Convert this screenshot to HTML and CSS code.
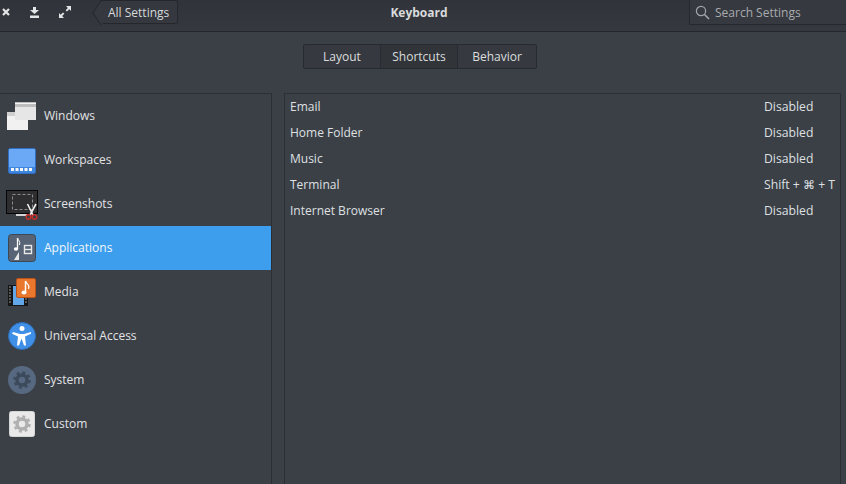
FILE: index.html
```html
<!DOCTYPE html>
<html lang="en">
<head>
    <meta charset="UTF-8">
    <title>Keyboard</title>
    <link rel="stylesheet" href="styles.css">
</head>
<body>
    <header class="titlebar">
        <div class="window-controls">
            <svg class="control close" width="10" height="10" viewBox="0 0 10 10"><path d="M2 2l6 6M8 2l-6 6" stroke="#e4e5e6" stroke-width="2.2" fill="none"/></svg>
            <svg class="control save" width="12" height="12" viewBox="0 0 12 12"><path d="M4 1h3v3h3L5.500 8 1 4h3zM1 9.500h9V12H1z" fill="#e4e5e6"/></svg>
            <svg class="control maximize" width="14" height="14" viewBox="0 0 14 14"><path d="M8 1h5v5l-1.700-1.700-2.300 2.300-1.400-1.400 2.300-2.200zM1 13V8l1.700 1.700 2.300-2.300 1.400 1.400-2.300 2.200L6 13z" fill="#e4e5e6"/></svg>
        </div>
        <button class="back-button"><span class="back-label">All Settings</span></button>
        <div class="title">Keyboard</div>
        <div class="search">
            <svg width="15" height="15" viewBox="0 0 15 15"><circle cx="6" cy="6" r="4.600" stroke="#a3a5a8" stroke-width="1.200" fill="none"/><path d="M9.500 9.500l4.500 4.500" stroke="#a3a5a8" stroke-width="1.600"/></svg>
            <span>Search Settings</span>
        </div>
    </header>

    <div class="tabs-row">
        <div class="tabs">
            <div class="tab tab-layout">Layout</div>
            <div class="tab tab-shortcuts active">Shortcuts</div>
            <div class="tab tab-behavior">Behavior</div>
        </div>
    </div>

    <main class="content">
        <nav class="sidebar">
            <div class="item">
                <svg viewBox="0 0 44 44"><rect x="7" y="18" width="21" height="18" fill="#f1f1f1"/><rect x="7" y="18" width="8" height="4" fill="#cfcfcf"/><rect x="15" y="8" width="21" height="18" fill="#e6e6e6"/><rect x="15" y="8" width="21" height="5" fill="#bdbdbd"/><rect x="15" y="9" width="21" height="1" fill="#f4f4f4"/></svg>
                <span>Windows</span>
            </div>
            <div class="item">
                <svg viewBox="0 0 44 44"><rect x="8.500" y="10.500" width="27" height="25" rx="2" fill="#3f86df" stroke="#2e6fc4"/><rect x="9" y="11" width="26" height="18" fill="#6ba8f5"/><path d="M11 30h3v3h-3zM15.500 30h3v3h-3zM20 30h3v3h-3zM24.500 30h3v3h-3zM29 30h3v3h-3z" fill="#f4f7fb"/></svg>
                <span>Workspaces</span>
            </div>
            <div class="item">
                <svg viewBox="0 0 44 44"><rect x="6.500" y="8.500" width="31" height="23" fill="#2e2e30" stroke="#050505"/><rect x="12.500" y="12.500" width="20" height="15" fill="none" stroke="#8c8c8c" stroke-dasharray="3 2"/><path d="M16 32h11v2H16z" fill="#d4d4d4"/><path d="M27.500 22l5.500 11M36 22l-6 11" stroke="#f0f0f0" stroke-width="1.600"/><circle cx="28.500" cy="35" r="2.300" fill="none" stroke="#c4312b" stroke-width="1.500"/><circle cx="34.500" cy="35" r="2.300" fill="none" stroke="#c4312b" stroke-width="1.500"/></svg>
                <span>Screenshots</span>
            </div>
            <div class="item selected">
                <svg viewBox="0 0 44 44"><rect x="8.500" y="8.500" width="27" height="27" rx="3" fill="#586475" stroke="#3e4650"/><path d="M17.500 12v11" stroke="#fff" stroke-width="1.300"/><path d="M17.500 12c1 3 3 3 2 7" fill="none" stroke="#fff"/><ellipse cx="16" cy="23" rx="2.200" ry="1.700" fill="#fff"/><path d="M19 26v8h-5z" fill="#e8e8e8"/><rect x="24.500" y="19.500" width="7" height="8" fill="none" stroke="#e8e8e8" stroke-width="1.400"/><path d="M24.500 23.500h7" stroke="#e8e8e8" stroke-width="1.400"/></svg>
                <span>Applications</span>
            </div>
            <div class="item">
                <svg viewBox="0 0 44 44"><rect x="8" y="15" width="20" height="21" fill="#161616"/><path d="M9 17h2M9 20h2M9 23h2M9 26h2M9 29h2M9 32h2M25 29h2M25 32h2" stroke="#999"/><rect x="13" y="16" width="11" height="19" fill="#62a7ea"/><rect x="16.500" y="8.500" width="19" height="19" rx="1.500" fill="#e9772d" stroke="#b9531a"/><path d="M25.500 11v11" stroke="#fff" stroke-width="1.500"/><path d="M25.500 11c1 4 5 3 3 8" fill="none" stroke="#fff" stroke-width="1.200"/><ellipse cx="24" cy="22.500" rx="2.500" ry="2" fill="#fff"/></svg>
                <span>Media</span>
            </div>
            <div class="item">
                <svg viewBox="0 0 44 44"><circle cx="22" cy="22" r="13.500" fill="#3f8fe6" stroke="#2d6fbb"/><circle cx="22" cy="14.500" r="2.500" fill="#fff"/><path d="M13 18l7 2h4l7-2v1.800l-6 2.700 1 9h-2l-2.500-7-2.500 7h-2l1-9-6-2.700z" fill="#fff"/></svg>
                <span>Universal Access</span>
            </div>
            <div class="item">
                <svg viewBox="0 0 44 44"><circle cx="22" cy="22" r="14" fill="#566980"/><circle cx="22" cy="22" r="5" fill="none" stroke="#3c4a5c" stroke-width="3.500"/><circle cx="22" cy="22" r="7.500" fill="none" stroke="#3c4a5c" stroke-width="2.500" stroke-dasharray="3 2.900"/></svg>
                <span>System</span>
            </div>
            <div class="item">
                <svg viewBox="0 0 44 44"><rect x="9.500" y="9.500" width="25" height="25" rx="2" fill="#e9e9e9" stroke="#d6d6d6"/><circle cx="22" cy="22" r="5" fill="none" stroke="#b0b0b0" stroke-width="3.500"/><circle cx="22" cy="22" r="7.500" fill="none" stroke="#b0b0b0" stroke-width="2.500" stroke-dasharray="3 2.900"/></svg>
                <span>Custom</span>
            </div>
        </nav>

        <section class="shortcuts">
            <div class="row"><span>Email</span><span class="accel">Disabled</span></div>
            <div class="row"><span>Home Folder</span><span class="accel">Disabled</span></div>
            <div class="row"><span>Music</span><span class="accel">Disabled</span></div>
            <div class="row"><span>Terminal</span><span class="accel">Shift + ⌘ + T</span></div>
            <div class="row"><span>Internet Browser</span><span class="accel">Disabled</span></div>
        </section>
    </main>
</body>
</html>
```

FILE: styles.css
```css
*{
    box-sizing: border-box;
}

html, body{
    height: 100%;
}

body{
    margin: 0;
    height: 484px;
    overflow: hidden;
    background: #3b3f46;
    color: #e6e7e8;
    font-family: "Open Sans", "Noto Sans", sans-serif;
    font-size: 12px;
    display: flex;
    flex-direction: column;
}

.titlebar{
    height: 32px;
    flex: none;
    display: flex;
    align-items: flex-start;
    background: linear-gradient(#30333a, #35383e);
    border-bottom: 1px solid #25272c;
}

.window-controls{
    width: 100px;
    height: 24px;
    flex: none;
    display: flex;
    align-items: center;
}

.control{
    display: block;
    flex: none;
}

.close{
    margin-left: 1px;
}

.save{
    margin-left: 18px;
}

.maximize{
    margin-left: 17px;
}

.back-button{
    position: relative;
    width: 78px;
    height: 24px;
    padding: 0 0 0 8px;
    margin: 0;
    background: #35383e;
    border: 1px solid #25272c;
    border-left: 0;
    border-radius: 0 2px 2px 0;
    color: #d6d8da;
    font: inherit;
    text-align: left;
}

.back-button::before{
    content: "";
    position: absolute;
    left: -8.500px;
    top: 2.500px;
    width: 17px;
    height: 17px;
    background: #35383e;
    border-left: 1px solid #25272c;
    border-bottom: 1px solid #25272c;
    transform: scaleX(.67) rotate(45deg);
}

.back-label{
    position: relative;
}

.title{
    width: 482px;
    margin-right: 29px;
    height: 24px;
    line-height: 25px;
    text-align: center;
    font-weight: 700;
    color: #d9dadb;
}

.search{
    flex: 1;
    height: 25px;
    display: flex;
    align-items: center;
    gap: 5px;
    padding-left: 5px;
    background: #363940;
    border: 1px solid #26282d;
    border-top: 0;
    border-right: 0;
    border-radius: 0 0 0 2px;
    color: #a9abad;
}

.tabs-row{
    height: 61px;
    flex: none;
    padding: 12px 0 0 303px;
}

.tabs{
    width: 234px;
    height: 25px;
    display: flex;
    border: 1px solid #272a2f;
    border-radius: 2px;
    background: #363a40;
}

.tab{
    line-height: 23px;
    text-align: center;
    color: #dcddde;
}

.tab-layout{
    width: 76px;
}

.tab-shortcuts{
    width: 78px;
}

.tab-behavior{
    flex: 1;
}

.tab.active{
    background: #31353a;
    border-left: 1px solid #272a2f;
    border-right: 1px solid #272a2f;
}

.content{
    flex: 1;
    display: flex;
    min-height: 0;
}

.sidebar{
    width: 272px;
    flex: none;
    border-top: 1px solid #2b2e33;
    border-right: 1px solid #2b2e33;
}

.item{
    height: 44px;
    display: flex;
    align-items: center;
    padding-bottom: 2px;
    color: #e1e3e5;
}

.item svg{
    width: 44px;
    height: 44px;
    margin-bottom: -2px;
    flex: none;
    overflow: visible;
}

.item.selected{
    background: #3d9eee;
    color: #f2f7fb;
}

.shortcuts{
    width: 557px;
    margin-left: 12px;
    border: 1px solid #2b2e33;
    border-bottom: 0;
}

.row{
    height: 26px;
    display: flex;
    align-items: center;
    padding: 0 0 2px 5px;
    color: #dfe0e2;
}

.accel{
    margin-left: auto;
    width: 76px;
    font-size: 12.200px;
}
```
